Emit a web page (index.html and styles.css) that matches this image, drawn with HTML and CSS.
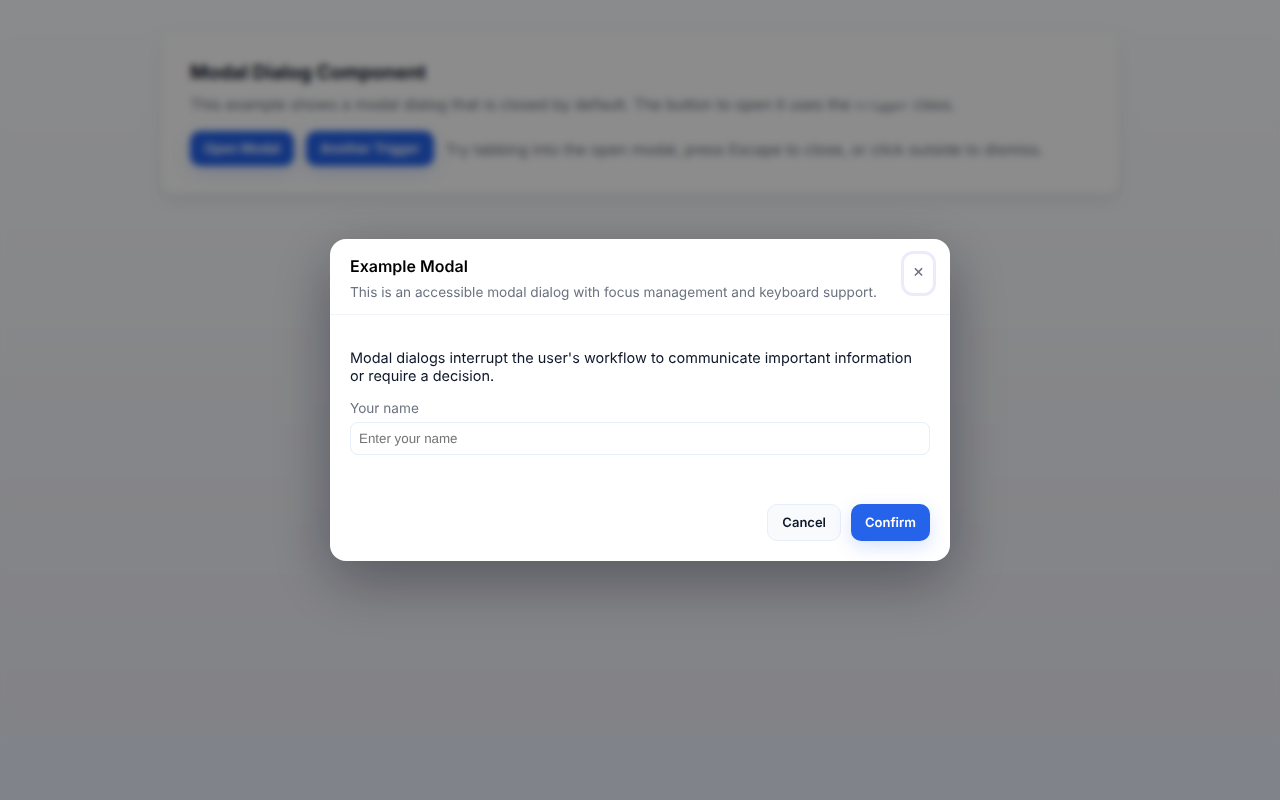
FILE: index.html
```html
<!DOCTYPE html>
<html lang="en">
<head>
<meta charset="utf-8">
<title>Modal Dialog Component</title>
<link rel="stylesheet" href="styles.css">
</head>
<body>
<main class="page">
  <section class="card">
    <h1 class="card-title">Modal Dialog Component</h1>
    <p class="card-text">This example shows a modal dialog that is closed by default. The button to open it uses the <code class="code">trigger</code> class.</p>
    <div class="actions">
      <button class="btn btn-primary trigger" type="button">Open Modal</button>
      <button class="btn btn-primary trigger" type="button">Another Trigger</button>
      <span class="hint">Try tabbing into the open modal, press Escape to close, or click outside to dismiss.</span>
    </div>
  </section>
</main>
<div class="overlay">
  <div class="modal" role="dialog" aria-modal="true">
    <header class="modal-header">
      <div class="modal-heading">
        <h2 class="modal-title">Example Modal</h2>
        <p class="modal-sub">This is an accessible modal dialog with focus management and keyboard support.</p>
      </div>
      <button class="close" type="button" aria-label="Close">×</button>
    </header>
    <div class="modal-body">
      <p class="modal-text">Modal dialogs interrupt the user's workflow to communicate important information or require a decision.</p>
      <label class="field-label" for="name">Your name</label>
      <input class="field-input" id="name" type="text" placeholder="Enter your name">
    </div>
    <footer class="modal-footer">
      <button class="btn btn-ghost" type="button">Cancel</button>
      <button class="btn btn-primary" type="button">Confirm</button>
    </footer>
  </div>
</div>
</body>
</html>
```
FILE: styles.css
```css
* { box-sizing: border-box; }
html { background: #eaf0fc; }
body {
  margin: 0;
  min-height: 736px;
  font-family: Inter, "Liberation Sans", sans-serif;
  color: #0f172a;
  background: linear-gradient(180deg, #fbfdff, #edeef5);
  text-rendering: geometricPrecision;
}
button, input { text-rendering: inherit; }
.page { width: 956px; margin: 0 auto; padding-top: 32px; }
.card {
  background: #ffffff;
  border-radius: 12px;
  padding: 28px;
  height: 161px;
  box-shadow: 0 6px 18px rgba(15, 23, 42, 0.08);
}
.card-title { margin: 0 0 9px; font-size: 19.2px; line-height: 24px; font-weight: 700; }
.card-text { margin: 0 0 16px; font-size: 15.36px; line-height: 24px; color: #6b7280; }
.code { font-family: "Liberation Mono", monospace; font-size: 12.8px; }
.actions { display: flex; align-items: center; gap: 12px; margin-top: -4px; }
.hint { font-size: 15.3px; color: #6b7280; padding-top: 1px; }
.btn {
  font-family: inherit;
  font-size: 13px;
  font-weight: 600;
  line-height: 16px;
  border-radius: 10px;
  border: 0;
  padding: 9px 14px;
  height: 35px;
}
.btn-primary { background: #2563eb; color: #ffffff; box-shadow: 0 6px 18px rgba(37, 99, 235, 0.18); }
.btn-ghost { background: #f8fafc; color: #0f172a; border: 1px solid #e6eefc; }
.overlay {
  position: fixed;
  inset: 0;
  display: flex;
  flex-direction: column;
  align-items: center;
  padding-top: 239px;
  background: rgba(0, 0, 0, 0.45);
  backdrop-filter: blur(3.5px);
}
.modal {
  width: 620px;
  height: 322px;
  background: #ffffff;
  border-radius: 16px;
  box-shadow: 0 20px 60px rgba(2, 6, 23, 0.35);
  display: flex;
  flex-direction: column;
  will-change: transform;
}
.modal-header {
  height: 76px;
  padding: 12px 14px 0 20px;
  display: flex;
  justify-content: space-between;
  align-items: flex-start;
  border-bottom: 1px solid #f1f5f9;
}
.modal-heading { padding-top: 6px; }
.modal-title { margin: 0 0 9px; font-size: 16px; line-height: 19px; font-weight: 600; color: #000; }
.modal-sub { margin: 0; font-size: 13.62px; line-height: 17px; color: #6b7280; }
.close {
  width: 35px;
  height: 45px;
  background: #fff;
  border: 3px solid #ebebfc;
  border-radius: 12px;
  font-family: inherit;
  font-size: 18px;
  line-height: 20px;
  color: #6b7280;
  padding: 0 0 3px;
}
.modal-body { padding: 35px 20px 0; flex: 1; }
.modal-text { margin: 0 0 15px; font-size: 14.47px; line-height: 18px; color: #0f172a; }
.field-label { display: block; margin-bottom: 4px; font-size: 13.6px; line-height: 17px; color: #6b7280; }
.field-input {
  display: block;
  width: 100%;
  height: 33px;
  border: 1px solid #e6eefc;
  border-radius: 8px;
  padding: 0 8px;
  font-family: "Liberation Sans", sans-serif;
  font-size: 13.33px;
}
.field-input::placeholder { color: #757575; }
.modal-footer { display: flex; justify-content: flex-end; gap: 10px; padding: 0 20px 20px; }
.modal-footer .btn { height: 37px; }
```
